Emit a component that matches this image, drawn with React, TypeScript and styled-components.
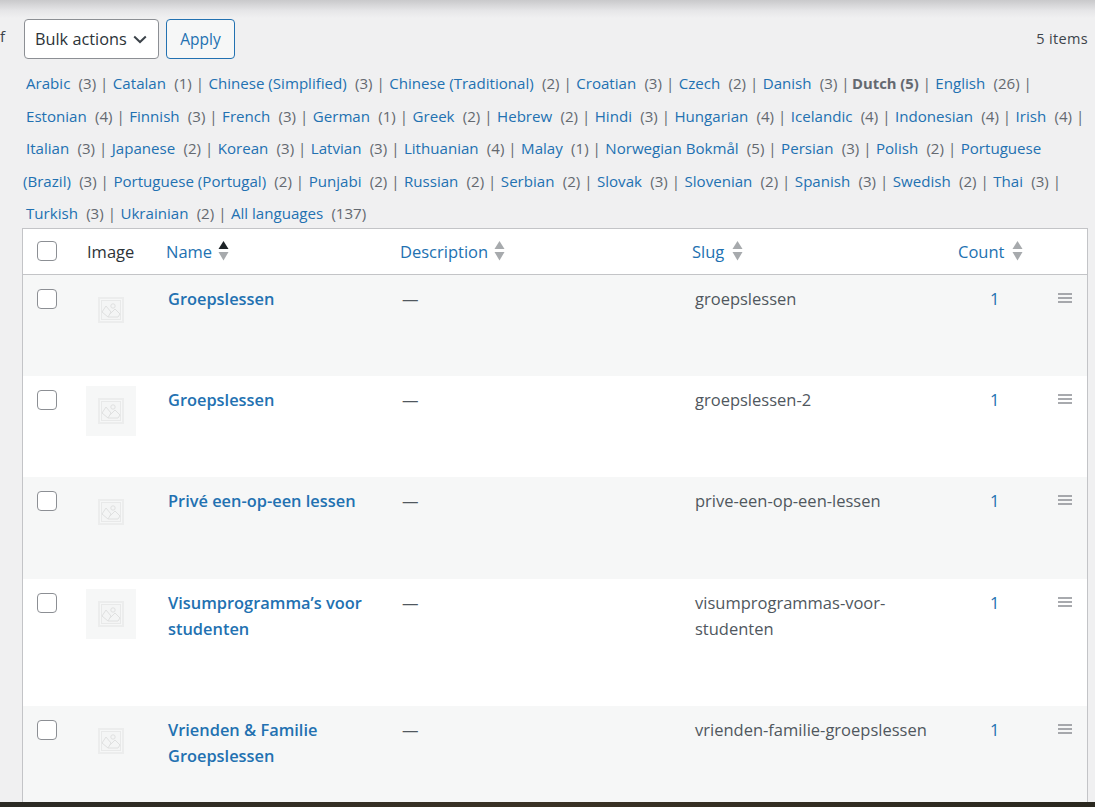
import React from "react";
import styled, { createGlobalStyle } from "styled-components";

const Global = createGlobalStyle`
  html, body { margin: 0; padding: 0; background: #f0f0f1; }
  body { font-family: "Open Sans", "Noto Sans", sans-serif; font-size: 15px; color: #50575e; overflow: hidden; }
  * { box-sizing: border-box; }
  a { color: #2271b1; text-decoration: none; }
`;

const Page = styled.div`
  position: relative;
  width: 1095px;
  height: 807px;
  overflow: hidden;
  display: flex;
  flex-direction: column;
`;
const TopShade = styled.div`
  position: absolute;
  inset: 0 0 auto 0;
  height: 18px;
  background: linear-gradient(#c9c9cb, #e6e6e8 60%, #f0f0f1);
`;
const Content = styled.main`
  flex: 1;
  min-height: 0;
  overflow: hidden;
  padding: 19px 7px 0 22px;
  position: relative;
`;
const ClippedLetter = styled.span`
  position: absolute;
  left: 0;
  top: 25px;
  font-size: 15px;
  line-height: 22px;
  color: #3c434a;
`;
const Toolbar = styled.div`
  display: flex;
  align-items: center;
  height: 40px;
  padding-left: 2px;
  gap: 7px;
`;
const BulkSelect = styled.div`
  width: 135px;
  height: 40px;
  background: #fff;
  border: 1px solid #8c8f94;
  border-radius: 4px;
  display: flex;
  align-items: center;
  justify-content: space-between;
  padding: 0 11px 0 10px;
  font-size: 16.3px;
  color: #2c3338;
`;
const ApplyButton = styled.button`
  width: 69px;
  height: 40px;
  background: #f6f7f7;
  border: 1px solid #2271b1;
  border-radius: 4px;
  color: #2271b1;
  font: inherit;
  font-size: 15.5px;
  padding: 0;
`;
const ItemCount = styled.span`
  margin-left: auto;
  margin-bottom: 2px;
  color: #3c434a;
  font-size: 14.5px;
  letter-spacing: 0.35px;
`;
const Languages = styled.ul`
  list-style: none;
  margin: 8.4px 0 0 1px;
  padding: 0;
  line-height: 32.4px;
  font-size: 15.1px;
  height: 160.6px;
`;
const Language = styled.li<{ $current?: boolean }>`
  display: inline;
  margin-left: ${(p) => (p.$current ? 1 : 3)}px;
  color: #646970;
  font-weight: ${(p) => (p.$current ? 700 : 400)};
  font-size: ${(p) => (p.$current ? "14.8px" : "inherit")};
`;
const Count = styled.span`
  color: #646970;
  margin-left: 4.3px;
`;
const SepMark = styled.span`
  color: #646970;
  font-weight: 400;
  margin-right: 1.5px;
`;
const Table = styled.div`
  background: #fff;
  border: 1px solid #c3c4c7;
  border-bottom: 0;
`;
const Grid = styled.div`
  display: grid;
  grid-template-columns: 47px 96px 234px 292px 266px 95px 36px;
`;
const HeadRow = styled(Grid)`
  height: 46px;
  border-bottom: 1px solid #c3c4c7;
  align-items: center;
  font-size: 16.5px;
`;
const HeadCell = styled.div<{ $pad?: number; $gap?: number }>`
  padding-left: ${(p) => p.$pad ?? 0}px;
  display: flex;
  align-items: center;
  gap: ${(p) => p.$gap ?? 6}px;
  color: #2c3338;
`;
const Row = styled(Grid)<{ $alt: boolean; $h: number }>`
  height: ${(p) => p.$h}px;
  background: ${(p) => (p.$alt ? "#f6f7f7" : "#fff")};
  font-size: 16.5px;
  line-height: 26px;
`;
const Cell = styled.div<{ $pad?: number }>`
  padding: 11px 0 0 ${(p) => p.$pad ?? 0}px;
`;
const CheckCell = styled.div<{ $top: number }>`
  padding: ${(p) => p.$top}px 0 0 14px;
  line-height: 0;
`;
const Check = styled.span`
  display: inline-block;
  width: 20px;
  height: 20px;
  background: #fff;
  border: 1px solid #8c8f94;
  border-radius: 4px;
`;
const Thumb = styled.div`
  width: 50px;
  height: 50px;
  margin: 10px 0 0 16px;
  background: #f6f7f7;
  display: flex;
  align-items: center;
  justify-content: center;
`;
const TermName = styled.a`
  font-weight: 600;
  font-size: 16.4px;
  display: block;
  width: 215px;
`;
const Dash = styled.span`
  color: #50575e;
`;
const Slug = styled.div`
  width: 240px;
  color: #50575e;
`;
const CountLink = styled.a`
  display: block;
  padding-left: 32px;
`;
const DragCell = styled.div`
  padding: 9px 0 0 5px;
`;
const Footer = styled.div`
  height: 5px;
  flex: none;
  background: linear-gradient(90deg, #2b2a24, #3a3225 50%, #2a281f);
`;

const Sort = ({ active }: { active?: boolean }) => (
  <svg width="11" height="20" viewBox="0 0 11 20" aria-hidden="true">
    <path d="M5.5 0 L10.5 8 H0.5 Z" fill={active ? "#1d2327" : "#a7aaad"} />
    <path d="M0.5 11 H10.5 L5.5 19.5 Z" fill="#a7aaad" />
  </svg>
);
const Chevron = () => (
  <svg width="14" height="9" viewBox="0 0 14 9" aria-hidden="true">
    <path d="M1.2 1.5 L7 7 L12.8 1.5" fill="none" stroke="#3c434a" strokeWidth="2" />
  </svg>
);
const Placeholder = () => (
  <svg width="26" height="26" viewBox="0 0 26 26" aria-hidden="true">
    <rect x="1" y="1" width="24" height="24" fill="none" stroke="#eceded" strokeWidth="2" />
    <rect x="3.5" y="3.5" width="19" height="19" fill="#f4f5f5" stroke="#e8e9e9" />
    <circle cx="15" cy="9" r="2.2" fill="none" stroke="#dfe0e0" />
    <path d="M4 15 L8 9 L13 15 L10 20 L4 15 M12 17 L17 12 L22 17 L20 20 L10 20" fill="none" stroke="#dfe0e0" />
  </svg>
);
const DragHandle = () => (
  <svg width="14" height="10" viewBox="0 0 14 10" aria-hidden="true">
    <path d="M0 1 H14 M0 5 H14 M0 9 H14" stroke="#8c8f94" strokeWidth="1.6" />
  </svg>
);

const langs: [string[], number][] = [
  [["Arabic"], 3], [["Catalan"], 1], [["Chinese (Simplified)"], 3], [["Chinese (Traditional)"], 2], [["Croatian"], 3],
  [["Czech"], 2], [["Danish"], 3], [["Dutch"], 5], [["English"], 26], [["Estonian"], 4], [["Finnish"], 3], [["French"], 3],
  [["German"], 1], [["Greek"], 2], [["Hebrew"], 2], [["Hindi"], 3], [["Hungarian"], 4], [["Icelandic"], 4], [["Indonesian"], 4],
  [["Irish"], 4], [["Italian"], 3], [["Japanese"], 2], [["Korean"], 3], [["Latvian"], 3], [["Lithuanian"], 4], [["Malay"], 1],
  [["Norwegian Bokmål"], 5], [["Persian"], 3], [["Polish"], 2], [["Portuguese", "(Brazil)"], 3], [["Portuguese (Portugal)"], 2],
  [["Punjabi"], 2], [["Russian"], 2], [["Serbian"], 2], [["Slovak"], 3], [["Slovenian"], 2], [["Spanish"], 3], [["Swedish"], 2],
  [["Thai"], 3], [["Turkish"], 3], [["Ukrainian"], 2],
];

const rows = [
  { name: "Groepslessen", slug: "groepslessen", h: 101 },
  { name: "Groepslessen", slug: "groepslessen-2", h: 101 },
  { name: "Privé een-op-een lessen", slug: "prive-een-op-een-lessen", h: 102 },
  { name: "Visumprogramma’s voor studenten", slug: "visumprogrammas-voor-studenten", h: 127 },
  { name: "Vrienden & Familie Groepslessen", slug: "vrienden-familie-groepslessen", h: 127 },
];

export default function App() {
  return (
    <Page>
      <Global />
      <Content>
        <ClippedLetter>f</ClippedLetter>
        <Toolbar>
          <BulkSelect>Bulk actions <Chevron /></BulkSelect>
          <ApplyButton>Apply</ApplyButton>
          <ItemCount>5 items</ItemCount>
        </Toolbar>
        <Languages>
          {langs.map(([parts, n]) => (
            <React.Fragment key={parts[0] + n}>
              {parts[0] === "Dutch" ? (
                <Language $current>Dutch ({n}) <SepMark>|</SepMark></Language>
              ) : (
                <Language>
                  {parts.map((part) => (
                    <React.Fragment key={part}>
                      <a href="#">{part}</a>{" "}
                    </React.Fragment>
                  ))}
                  <Count>({n})</Count> <SepMark>|</SepMark>
                </Language>
              )}
              <wbr />
            </React.Fragment>
          ))}
          <Language>
            <a href="#">All languages</a> <Count>(137)</Count>
          </Language>
        </Languages>
        <Table>
          <HeadRow>
            <CheckCell $top={0}><Check /></CheckCell>
            <HeadCell $pad={17}>Image</HeadCell>
            <HeadCell><a href="#">Name</a><Sort active /></HeadCell>
            <HeadCell><a href="#">Description</a><Sort /></HeadCell>
            <HeadCell $gap={8}><a href="#">Slug</a><Sort /></HeadCell>
            <HeadCell $gap={8}><a href="#">Count</a><Sort /></HeadCell>
            <div />
          </HeadRow>
          {rows.map((r, i) => (
            <Row key={r.slug} $alt={i % 2 === 0} $h={r.h}>
              <CheckCell $top={14}><Check /></CheckCell>
              <Thumb><Placeholder /></Thumb>
              <Cell $pad={2}><TermName href="#">{r.name}</TermName></Cell>
              <Cell $pad={2}><Dash>—</Dash></Cell>
              <Cell $pad={3}><Slug>{r.slug}</Slug></Cell>
              <Cell><CountLink href="#">1</CountLink></Cell>
              <DragCell><DragHandle /></DragCell>
            </Row>
          ))}
        </Table>
      </Content>
      <TopShade />
      <Footer />
    </Page>
  );
}
